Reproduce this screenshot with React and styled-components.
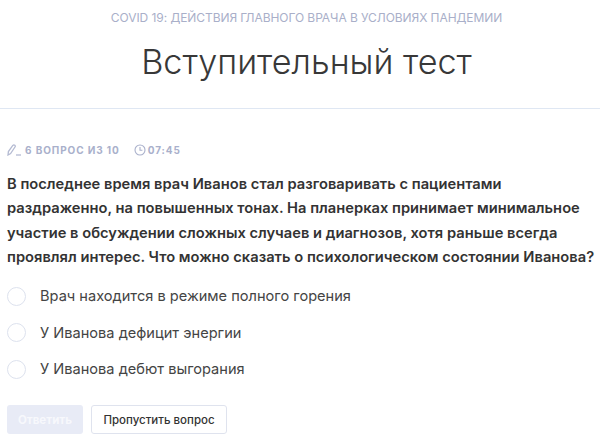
import React from 'react';
import styled, { createGlobalStyle } from 'styled-components';

const GlobalStyle = createGlobalStyle`
  html, body {
    margin: 0;
    padding: 0;
    background: #fff;
    overflow: hidden;
  }
  body {
    font-family: Inter, "Noto Sans", sans-serif;
    color: #333;
  }
`

const answers = [
  'Врач находится в режиме полного горения',
  'У Иванова дефицит энергии',
  'У Иванова дебют выгорания',
];

const App = () => {
  return (
    <>
      <GlobalStyle />
      <Header>
        <Course>COVID 19: ДЕЙСТВИЯ ГЛАВНОГО ВРАЧА В УСЛОВИЯХ ПАНДЕМИИ</Course>
        <Title>Вступительный тест</Title>
      </Header>
      <Content>
        <Meta>
          <MetaItem $gap={4}>
            <svg width="14" height="12" viewBox="0 0 14 12" fill="none" stroke="#b4bad2" strokeWidth="1.3">
              <path d="M1 11 L1.4 7.6 L5.8 1.4 Q6.8 0.5 7.8 1.2 Q8.7 2 8 3 L3.6 9.6 Z" />
              <path d="M9 11 H14" />
            </svg>
            6 ВОПРОС ИЗ 10
          </MetaItem>
          <MetaItem $gap={2}>
            <svg width="12" height="12" viewBox="0 0 12 12" fill="none" stroke="#a9b0cb" strokeWidth="1.1">
              <circle cx="6" cy="6" r="5" />
              <path d="M6 3 V6.3 H8.4" />
            </svg>
            07:45
          </MetaItem>
        </Meta>
        <Question>
          <div>В последнее время врач Иванов стал разговаривать с пациентами</div>
          <div>раздраженно, на повышенных тонах. На планерках принимает минимальное</div>
          <div>участие в обсуждении сложных случаев и диагнозов, хотя раньше всегда</div>
          <div>проявлял интерес. Что можно сказать о психологическом состоянии Иванова?</div>
        </Question>
        <Answers>
          {answers.map((each) => (
            <Answer key={each}>
              <Radio />
              <AnswerText>{each}</AnswerText>
            </Answer>
          ))}
        </Answers>
        <Buttons>
          <SubmitBtn>Ответить</SubmitBtn>
          <SkipBtn>Пропустить вопрос</SkipBtn>
        </Buttons>
      </Content>
    </>
  )
}

export default App;

const Header = styled.div`
  height: 108px;
  padding-left: 13px;
  border-bottom: 1px solid #dfe7f3;
  display: flex;
  flex-direction: column;
  align-items: center;
`
const Course = styled.div`
  margin-top: 10px;
  font-size: 12px;
  line-height: 16px;
  color: #a9afc9;
  white-space: nowrap;
  letter-spacing: -0.07px;
`
const Title = styled.h1`
  margin: 13px 0 0;
  font-size: 34.2px;
  line-height: 46px;
  font-weight: 300;
  color: #383838;
  white-space: nowrap;
`
const Content = styled.div`
  padding: 33px 0 0 7px;
`
const Meta = styled.div`
  display: flex;
  gap: 14px;
  height: 16px;
  align-items: center;
`
const MetaItem = styled.div`
  display: flex;
  align-items: center;
  gap: ${({ $gap }) => $gap}px;
  font-size: 10px;
  font-weight: 700;
  letter-spacing: 0.9px;
  color: #a9b0cb;
  white-space: nowrap;
`
const Question = styled.div`
  margin-top: 14px;
  font-size: 14.7px;
  line-height: 24.3px;
  font-weight: 600;
  letter-spacing: 0.01px;
  color: #333;
  white-space: nowrap;
`
const Answers = styled.div`
  margin-top: 17px;
  display: flex;
  flex-direction: column;
  gap: 16.5px;
`
const Answer = styled.label`
  display: flex;
  align-items: center;
  height: 20px;
  gap: 14px;
`
const Radio = styled.span`
  box-sizing: border-box;
  width: 19px;
  height: 19px;
  border: 1px solid #dde2ee;
  border-radius: 50%;
  background: #fff;
`
const AnswerText = styled.span`
  font-size: 14.6px;
  line-height: 20px;
  color: #444;
  white-space: nowrap;
`
const Buttons = styled.div`
  display: flex;
  gap: 8px;
  margin-top: 26px;
`
const SubmitBtn = styled.button`
  width: 76px;
  height: 29px;
  border: 0;
  border-radius: 3px;
  background: #e8ebf6;
  color: #f7f8fc;
  font-family: inherit;
  font-size: 11.5px;
  font-weight: 700;
  padding: 0;
`
const SkipBtn = styled.button`
  width: 136px;
  height: 29px;
  border: 1px solid #dfe3ee;
  border-radius: 3px;
  background: #fff;
  color: #333;
  font-family: inherit;
  font-size: 11.5px;
  font-weight: 500;
  padding: 0;
`
